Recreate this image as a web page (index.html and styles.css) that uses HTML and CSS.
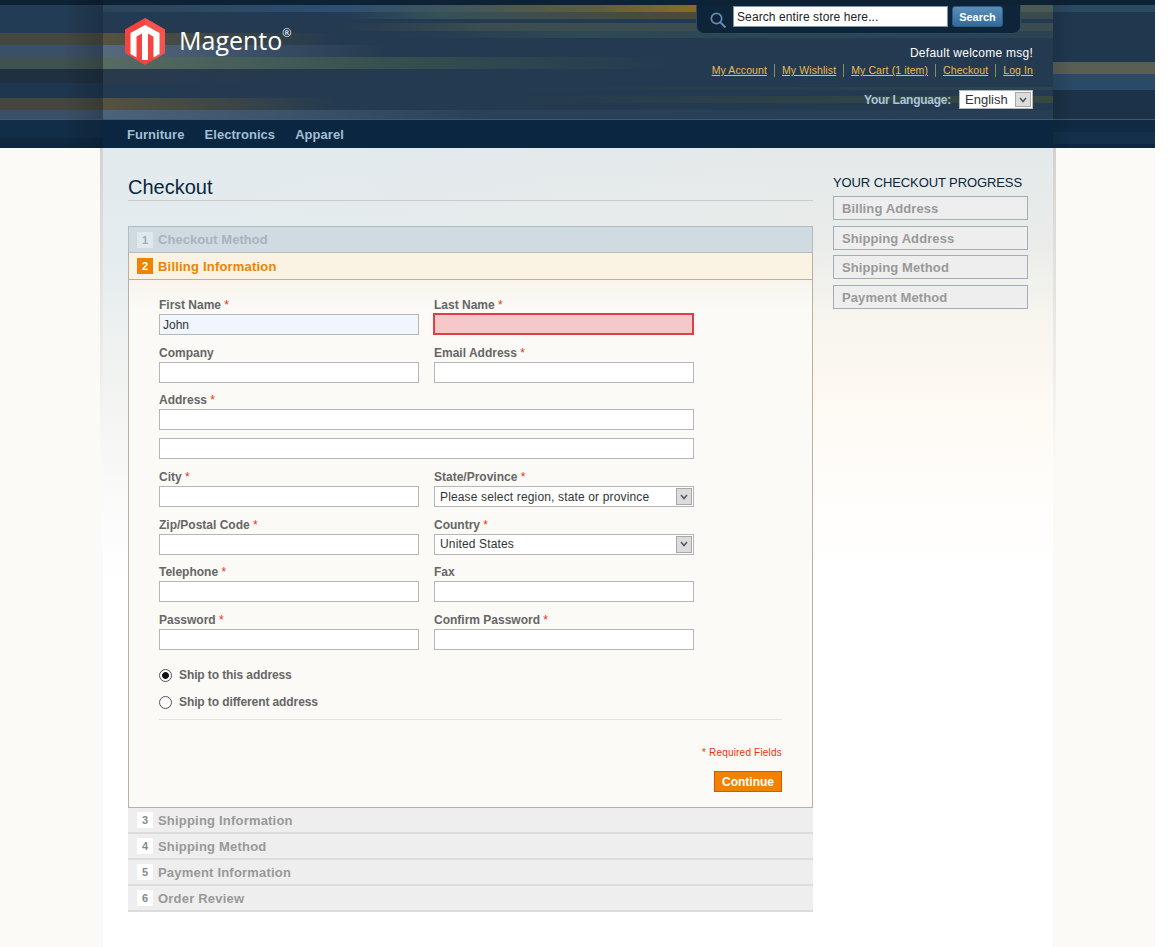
FILE: index.html
```html
<!DOCTYPE html>
<html lang="en">
<head>
    <meta charset="UTF-8">
    <title>Checkout</title>
    <link rel="stylesheet" href="styles.css">
</head>
<body>
<div class="page">
    <header class="header">
        <div class="header-side side-left"></div>
        <div class="header-inner">
            <div class="header-top">
                <a class="logo" href="#">
                    <svg class="logo-mark" width="40" height="47" viewBox="0 0 40 47">
                        <polygon points="20,0 40,11.5 40,35 20,47 0,35 0,11.5" fill="#f4443f"/>
                        <polygon points="20,0 40,11.5 40,35 30,41 30,21 20,15" fill="#f4544e"/>
                        <polygon points="20,7 34.5,15 34.5,36 28.5,39.5 28.5,18.5 23,15.5 23,42 17,42 17,15.5 11.5,18.5 11.5,39.5 5.5,36 5.5,15" fill="#fff"/>
                    </svg>
                    <span class="logo-text">Magento<sup>®</sup></span>
                </a>
                <div class="header-right">
                    <form class="search">
                        <svg class="search-icon" width="16" height="16" viewBox="0 0 16 16">
                            <circle cx="6.5" cy="6.5" r="5.2" fill="none" stroke="#5f8cb0" stroke-width="1.7"/>
                            <line x1="10.3" y1="10.3" x2="15.5" y2="15.5" stroke="#5f8cb0" stroke-width="2"/>
                        </svg>
                        <input class="search-input" type="text" value="Search entire store here...">
                        <button class="search-btn" type="button">Search</button>
                    </form>
                    <p class="welcome">Default welcome msg!</p>
                    <ul class="links">
                        <li><a href="#">My Account</a></li>
                        <li><a href="#">My Wishlist</a></li>
                        <li><a href="#">My Cart (1 item)</a></li>
                        <li><a href="#">Checkout</a></li>
                        <li><a href="#">Log In</a></li>
                    </ul>
                    <div class="language">
                        <label>Your Language:</label>
                        <div class="select-wrap lang-select">
                            <select><option>English</option></select>
                            <span class="select-arrow"><svg width="8" height="6" viewBox="0 0 8 6"><path d="M1 1l3 3.5L7 1" fill="none" stroke="#555" stroke-width="1.5"/></svg></span>
                        </div>
                    </div>
                </div>
            </div>
            <nav class="nav">
                <a href="#">Furniture</a>
                <a href="#">Electronics</a>
                <a href="#">Apparel</a>
            </nav>
        </div>
        <div class="header-side side-right"></div>
    </header>

    <div class="main">
        <div class="col-main">
            <h1 class="page-title">Checkout</h1>
            <ol class="checkout">
                <li class="step step-done"><span class="num">1</span><h2>Checkout Method</h2></li>
                <li class="step step-active"><span class="num">2</span><h2>Billing Information</h2></li>
                <li class="step-body">
                    <div class="row">
                        <div class="field"><label>First Name <em>*</em></label><input class="filled" type="text" value="John"></div>
                        <div class="field"><label>Last Name <em>*</em></label><input class="error" type="text"></div>
                    </div>
                    <div class="row">
                        <div class="field"><label>Company</label><input type="text"></div>
                        <div class="field"><label>Email Address <em>*</em></label><input type="text"></div>
                    </div>
                    <div class="row row-wide">
                        <div class="field"><label>Address <em>*</em></label><input type="text"><input class="second" type="text"></div>
                    </div>
                    <div class="row">
                        <div class="field"><label>City <em>*</em></label><input type="text"></div>
                        <div class="field"><label>State/Province <em>*</em></label>
                            <div class="select-wrap">
                                <select><option>Please select region, state or province</option></select>
                                <span class="select-arrow"><svg width="8" height="6" viewBox="0 0 8 6"><path d="M1 1l3 3.5L7 1" fill="none" stroke="#555" stroke-width="1.5"/></svg></span>
                            </div>
                        </div>
                    </div>
                    <div class="row">
                        <div class="field"><label>Zip/Postal Code <em>*</em></label><input type="text"></div>
                        <div class="field"><label>Country <em>*</em></label>
                            <div class="select-wrap">
                                <select><option>United States</option></select>
                                <span class="select-arrow"><svg width="8" height="6" viewBox="0 0 8 6"><path d="M1 1l3 3.5L7 1" fill="none" stroke="#555" stroke-width="1.5"/></svg></span>
                            </div>
                        </div>
                    </div>
                    <div class="row">
                        <div class="field"><label>Telephone <em>*</em></label><input type="text"></div>
                        <div class="field"><label>Fax</label><input type="text"></div>
                    </div>
                    <div class="row">
                        <div class="field"><label>Password <em>*</em></label><input type="password"></div>
                        <div class="field"><label>Confirm Password <em>*</em></label><input type="password"></div>
                    </div>
                    <div class="ship">
                        <label class="radio"><input type="radio" name="ship" checked> Ship to this address</label>
                        <label class="radio"><input type="radio" name="ship"> Ship to different address</label>
                    </div>
                    <div class="actions">
                        <p class="required">* Required Fields</p>
                        <button class="continue" type="button">Continue</button>
                    </div>
                </li>
                <li class="step step-todo"><span class="num">3</span><h2>Shipping Information</h2></li>
                <li class="step step-todo"><span class="num">4</span><h2>Shipping Method</h2></li>
                <li class="step step-todo"><span class="num">5</span><h2>Payment Information</h2></li>
                <li class="step step-todo"><span class="num">6</span><h2>Order Review</h2></li>
            </ol>
        </div>
        <aside class="col-right">
            <h3 class="progress-title">Your Checkout Progress</h3>
            <ul class="progress">
                <li>Billing Address</li>
                <li>Shipping Address</li>
                <li>Shipping Method</li>
                <li>Payment Method</li>
            </ul>
        </aside>
    </div>
</div>
</body>
</html>
```

FILE: styles.css
```css
* {
    box-sizing: border-box;
}

html, body {
    margin: 0;
    padding: 0;
    background: #fff;
}

body {
    font-family: "Liberation Sans", Arial, sans-serif;
    font-size: 12px;
    color: #666;
}

ul, ol {
    list-style: none;
    margin: 0;
    padding: 0;
}

h1, h2, h3, p {
    margin: 0;
}

.page {
    width: 1155px;
    height: 947px;
    overflow: hidden;
    background:
        linear-gradient(to bottom, rgba(0, 0, 0, 0.16), rgba(0, 0, 0, 0)) 100px 148px / 3px 320px no-repeat,
        linear-gradient(to bottom, rgba(0, 0, 0, 0.16), rgba(0, 0, 0, 0)) 1053px 148px / 3px 320px no-repeat,
        #fbfaf6;
}

/* header */
.header {
    display: flex;
    height: 148px;
}

.header-side {
    flex: 1;
}

.side-left {
    flex: 0 0 103px;
    background:
        linear-gradient(to right, transparent 60%, rgba(0, 0, 0, 0.18)),
        linear-gradient(to bottom,
            #0d2235 0, #0d2235 5px,
            #233c55 5px, #233c55 33px,
            #45483f 33px, #45483f 45px,
            #3a4f68 45px, #3a4f68 57px,
            #3f5250 57px, #3f5250 69px,
            #1f3040 69px, #1f3040 83px,
            #1e3650 83px, #1e3650 98px,
            #45463e 98px, #45463e 110px,
            #3b5068 110px, #3b5068 119px,
            #40596c 119px, #40596c 120px,
            #122d47 120px, #122d47 138px,
            #0e2840 138px);
}

.side-right {
    background:
        linear-gradient(to left, transparent 80%, rgba(0, 0, 0, 0.12)),
        linear-gradient(to bottom,
            #0d2235 0, #0d2235 5px,
            #2a4a60 5px, #2a4a60 12px,
            #20384e 12px, #20384e 62px,
            #5a5f56 62px, #5a5f56 74px,
            #2a4a68 74px, #2a4a68 90px,
            #1c3248 90px, #1c3248 119px,
            #40596c 119px, #40596c 120px,
            #0f2a42 120px, #0f2a42 132px,
            #14304a 132px, #14304a 144px,
            #0e2840 144px);
}

.header-inner {
    width: 950px;
    height: 148px;
    display: flex;
    flex-direction: column;
    background:
        linear-gradient(#0d2235, #0d2235) 0 0 / 100% 5px no-repeat,
        linear-gradient(to right, #2d4458, #2d4f72 25%, #3d5560 35%, #5e5e3c 52%, #8a6d25 62.5%, #4a5a52 96%) 0 5px / 100% 7px no-repeat,
        linear-gradient(to right, #223a52 25%, #36505a 35%, #4c4a38 62%, #3a4a4e 96%) 0 12px / 100% 7px no-repeat,
        linear-gradient(to right, transparent 25%, #3b4d50 40%, #3b4d50 96%) 0 23px / 100% 8px no-repeat,
        linear-gradient(to right, transparent 30%, #2f4855 50%, #2b4353 96%) 0 31px / 100% 7px no-repeat,
        linear-gradient(to right, #56523f, transparent 25%) 0 33px / 100% 12px no-repeat,
        linear-gradient(to right, #55697f, transparent 30%) 0 45px / 100% 12px no-repeat,
        linear-gradient(to right, #566b62, #36504f 30%, transparent 60%) 0 57px / 100% 12px no-repeat,
        linear-gradient(to right, #2a3a4c, transparent 30%) 0 69px / 100% 14px no-repeat,
        linear-gradient(to right, transparent 40%, #2e4450 100%) 0 87px / 100% 3px no-repeat,
        linear-gradient(to right, transparent 40%, #37493f 100%) 0 96px / 100% 7px no-repeat,
        linear-gradient(to right, #56523f, transparent 25%) 0 98px / 100% 12px no-repeat,
        linear-gradient(to right, #4c6479, #2a4157 40%, #263e55) 0 110px / 100% 9px no-repeat,
        linear-gradient(#40596c, #40596c) 0 119px / 100% 1px no-repeat,
        linear-gradient(#0b2640, #0b2640) 0 120px / 100% 28px no-repeat,
        #233a50;
}

.header-top {
    height: 120px;
    display: flex;
    justify-content: space-between;
    padding: 0 20px 0 22px;
}

.logo {
    display: flex;
    align-items: flex-start;
    padding-top: 18px;
    text-decoration: none;
}

.logo-text {
    font-family: "Open Sans", sans-serif;
    font-size: 25px;
    line-height: 30px;
    color: #fff;
    margin: 7px 0 0 14px;
}

.logo-text sup {
    font-size: 11px;
    line-height: 0;
    vertical-align: 13px;
}

.header-right {
    display: flex;
    flex-direction: column;
    align-items: flex-end;
}

.search {
    width: 325px;
    height: 29px;
    margin: 5px 12px 0 0;
    padding: 1px 0 0 13px;
    display: flex;
    align-items: flex-start;
    background: #0d2439;
    border: 1px solid #2c4a60;
    border-top: 0;
    border-radius: 0 0 8px 8px;
}

.search-icon {
    margin: 6px 7px 0 0;
}

.search-input {
    width: 215px;
    height: 21px;
    padding: 0 3px;
    border: 1px solid #7c99ac;
    font: 12px "Liberation Sans", Arial, sans-serif;
    letter-spacing: 0.1px;
    color: #222;
    background: #fff;
}

.search-btn {
    width: 51px;
    height: 21px;
    margin-left: 4px;
    padding: 0;
    border: 1px solid #2a5c86;
    border-radius: 3px;
    background: linear-gradient(to bottom, #5b8fb9, #336a9a);
    color: #fff;
    font: bold 11px "Liberation Sans", Arial, sans-serif;
}

.welcome {
    margin-top: 12px;
    color: #fff;
    font-size: 12px;
    line-height: 15px;
    letter-spacing: 0.25px;
}

.links {
    display: flex;
    margin-top: 3px;
    font-size: 10.5px;
    line-height: 13px;
    letter-spacing: 0.1px;
}

.links li + li {
    margin-left: 7px;
    padding-left: 7px;
    border-left: 1px solid #8a8a70;
}

.links a {
    color: #ebbb4e;
}

.language {
    display: flex;
    align-items: center;
    margin-top: 13px;
}

.language label {
    margin-right: 8px;
    font-weight: bold;
    letter-spacing: -0.25px;
    color: #a7c6dd;
}

.nav {
    display: flex;
    gap: 20px;
    padding: 6px 0 0 24px;
}

.nav a {
    font-size: 13px;
    line-height: 18px;
    font-weight: bold;
    letter-spacing: 0.05px;
    color: #a0bfd6;
    text-decoration: none;
}

/* selects */
.select-wrap {
    position: relative;
    height: 21px;
}

.select-wrap select {
    display: block;
    width: 100%;
    height: 100%;
    padding: 0 0 0 5px;
    border: 1px solid #b6b6b6;
    border-radius: 0;
    background: #fff;
    appearance: none;
    font: 12px "Liberation Sans", Arial, sans-serif;
    letter-spacing: 0.15px;
    color: #333;
}

.select-arrow {
    position: absolute;
    top: 2px;
    right: 2px;
    width: 16px;
    height: 17px;
    display: flex;
    align-items: center;
    justify-content: center;
    background: #dcdcdc;
    border: 1px solid #a8a8a8;
}

.lang-select {
    width: 74px;
    height: 19px;
}

.lang-select select {
    font-size: 13px;
    letter-spacing: 0;
}

.lang-select .select-arrow {
    height: 15px;
}

/* main area */
.main {
    width: 950px;
    height: 799px;
    margin-left: 103px;
    padding: 0 25px;
    display: flex;
    justify-content: space-between;
    background:
        radial-gradient(ellipse 720px 330px at 0 110px, rgba(224, 235, 242, 0.6), rgba(224, 235, 242, 0)),
        linear-gradient(to bottom, #e4e9ea 0, #e9ecea 90px, #f7f5ee 170px, #fdf9f2 240px, #fffdfa 340px, #fff 420px);
}

.col-main {
    width: 685px;
}

.page-title {
    height: 53px;
    padding-top: 27px;
    border-bottom: 1px solid #ccc;
    font-size: 20px;
    line-height: 25px;
    font-weight: normal;
    color: #0a263d;
}

.checkout {
    margin-top: 25px;
}

.step {
    display: flex;
    align-items: center;
    height: 26px;
    padding-left: 9px;
    border-bottom: 2px solid #dcdcdc;
    background: #eee;
    color: #999;
}

.step h2 {
    margin-top: 1px;
    font-size: 13px;
    line-height: 16px;
    font-weight: bold;
    letter-spacing: 0.2px;
    color: inherit;
}

.num {
    width: 16px;
    height: 16px;
    margin-right: 5px;
    background: #fff;
    color: #888;
    font-size: 11px;
    font-weight: bold;
    line-height: 16px;
    text-align: center;
}

.step-done {
    height: 27px;
    padding-left: 8px;
    border: 1px solid #b0bcc4;
    border-bottom-color: #b7bfc0;
    background: #d0dae1;
    color: #a8b4bc;
}

.step-done h2 {
    letter-spacing: 0.05px;
}

.step-done .num {
    background: #e1e8ed;
    color: #a0acb4;
}

.step-active {
    height: 27px;
    padding-left: 8px;
    border: 1px solid #bbb0a0;
    border-top: 0;
    background: #faf3e3;
    color: #f18200;
}

.step-active .num {
    background: #f18200;
    color: #fff;
}

.step-body {
    height: 528px;
    padding: 16px 30px 0;
    border: 1px solid #bbb0a0;
    border-top: 0;
    background: linear-gradient(to bottom, #f9f5ee 0, #fbfaf6 30px);
}

.row {
    display: flex;
    gap: 15px;
    height: 47.6px;
}

.row-wide {
    height: 77px;
}

.field {
    width: 260px;
}

.row-wide .field {
    width: 535px;
}

.field label {
    display: block;
    height: 18px;
    font-weight: bold;
    line-height: 19px;
    color: #666;
}

.field em {
    color: #eb340a;
    font-style: normal;
    font-weight: normal;
}

.field input {
    display: block;
    width: 100%;
    height: 21px;
    padding: 0 3px;
    border: 1px solid #b6b6b6;
    background: #fff;
    font: 12px "Liberation Sans", Arial, sans-serif;
    color: #333;
}

.field input.second {
    margin-top: 8px;
}

.field input.filled {
    background: #eff6fd;
}

.field input.error {
    width: calc(100% + 1px);
    height: 22px;
    margin: -1px 0 0 -1px;
    border: 2px solid #df4048;
    background: #f5c9c9;
}

.ship {
    margin-top: 3px;
    padding-bottom: 3px;
    border-bottom: 1px solid #e4e2dc;
}

.radio {
    display: flex;
    align-items: center;
    height: 27px;
    font-weight: bold;
    letter-spacing: -0.1px;
    color: #666;
}

.radio input {
    appearance: none;
    width: 13px;
    height: 13px;
    margin: 0 7px 0 0;
    border: 1px solid #555;
    border-radius: 50%;
    background: #fff;
}

.radio input:checked {
    background: radial-gradient(circle, #111 0, #111 3px, #fff 3.8px);
}

.actions {
    text-align: right;
}

.required {
    margin-top: 26px;
    font-size: 10px;
    line-height: 13px;
    letter-spacing: 0.2px;
    color: #eb340a;
}

.continue {
    width: 68px;
    height: 21px;
    margin-top: 12px;
    padding: 1px 0 0;
    border: 1px solid #de5400;
    background: #f18200;
    color: #fff;
    font: bold 12px "Liberation Sans", Arial, sans-serif;
}

/* sidebar */
.col-right {
    width: 195px;
    padding-top: 27px;
}

.progress-title {
    font-size: 13px;
    line-height: 15px;
    font-weight: normal;
    white-space: nowrap;
    text-transform: uppercase;
    letter-spacing: -0.1px;
    color: #0a263d;
}

.progress {
    margin-top: 6px;
}

.progress li {
    height: 24px;
    margin-bottom: 5.7px;
    padding-left: 8px;
    border: 1px solid #a0aeb5;
    background: #eee;
    color: #999;
    font-size: 13px;
    font-weight: bold;
    line-height: 23px;
    letter-spacing: 0.1px;
}
```
